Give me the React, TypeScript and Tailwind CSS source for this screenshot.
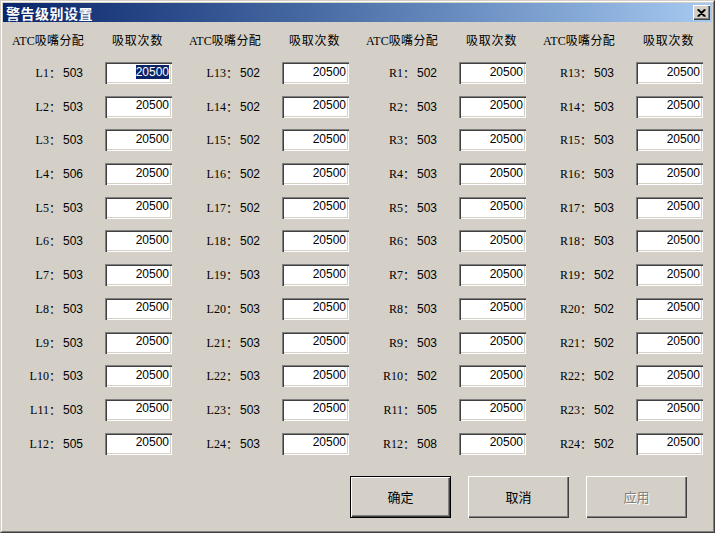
import React from "react";

const cjk = { fontFamily: '"Noto Sans CJK SC", "Liberation Sans", sans-serif' };
const serif = { fontFamily: '"Liberation Serif", "Noto Sans CJK SC", serif' };
const sans = { fontFamily: '"Liberation Sans", Arial, sans-serif' };

const groups: { p: string; start: number; vals: number[] }[] = [
  { p: "L", start: 1, vals: [503, 503, 503, 506, 503, 503, 503, 503, 503, 503, 503, 505] },
  { p: "L", start: 13, vals: [502, 502, 502, 502, 502, 502, 503, 503, 503, 503, 503, 503] },
  { p: "R", start: 1, vals: [502, 503, 503, 503, 503, 503, 503, 503, 503, 502, 505, 508] },
  { p: "R", start: 13, vals: [503, 503, 503, 503, 503, 503, 502, 502, 502, 502, 502, 502] },
];

function Field({ selected }: { selected?: boolean }) {
  return (
    <div
      className="w-[67px] h-[22px] bg-white flex items-center justify-end pr-[3px] pb-[3px] text-[12px] text-black shadow-[inset_1px_1px_0_#808080,inset_2px_2px_0_#404040,inset_-1px_-1px_0_#ffffff,inset_-2px_-2px_0_#d4d0c8]"
      style={sans}
    >
      <span className={selected ? "bg-[#0a246a] text-white leading-[14px]" : "leading-[14px]"}>20500</span>
    </div>
  );
}

function Btn({ label, def, disabled }: { label: string; def?: boolean; disabled?: boolean }) {
  return (
    <div
      className={
        "w-[101px] h-[42px] flex items-center justify-center text-[13px] " +
        (def
          ? "border border-black shadow-[inset_1px_1px_0_#ffffff,inset_-1px_-1px_0_#404040,inset_-2px_-2px_0_#808080]"
          : "shadow-[inset_1px_1px_0_#ffffff,inset_-1px_-1px_0_#404040,inset_-2px_-2px_0_#808080]")
      }
      style={cjk}
    >
      <span
        className={disabled ? "text-[#808080] [text-shadow:1px_1px_0_#ffffff]" : "text-black"}
      >
        {label}
      </span>
    </div>
  );
}

export default function App() {
  return (
    <div className="w-[715px] h-[533px] bg-[#d4d0c8] border border-t-[#d4d0c8] border-l-[#d4d0c8] border-r-[#404040] border-b-[#404040]">
      <div className="w-full h-full border border-t-white border-l-white border-r-[#808080] border-b-[#808080] p-[1px] flex flex-col">
        {/* title bar */}
        <div className="h-[19px] flex items-center justify-between bg-gradient-to-r from-[#0a246a] to-[#a6caf0] pl-[3px] pr-[2px]">
          <span className="text-white font-bold text-[14px] leading-none tracking-[0.5px]" style={cjk}>
            警告级别设置
          </span>
          <div className="w-[17px] h-[15px] bg-[#d4d0c8] flex items-center justify-center shadow-[inset_1px_1px_0_#ffffff,inset_-1px_-1px_0_#404040,inset_-2px_-2px_0_#808080]">
            <svg width="9" height="8" viewBox="0 0 9 8">
              <path d="M0.5 0.5 L7.5 7.5 M1.5 0.5 L8.5 7.5 M7.5 0.5 L0.5 7.5 M8.5 0.5 L1.5 7.5" stroke="#000" strokeWidth="1.2" />
            </svg>
          </div>
        </div>

        {/* columns */}
        <div className="grid grid-cols-[177px_177px_177px_177px] mt-[10px] -ml-[1px]">
          {groups.map((g, gi) => (
            <div key={gi} className="flex flex-col">
              <div className="flex h-[16px] items-center text-[12px] text-black">
                <span className="w-[110px] pl-[10px] whitespace-nowrap" style={cjk}>
                  <span className="text-[12px]" style={serif}>ATC</span>
                  <span className="text-[12px] tracking-[0.4px]">吸嘴分配</span>
                </span>
                <span className="tracking-[0.8px]" style={cjk}>吸取次数</span>
              </div>
              <div className="flex flex-col gap-y-[11.7px] mt-[14px]">
                {g.vals.map((v, i) => (
                  <div key={i} className="flex items-center h-[22px]">
                    <div className="w-[84px] pr-[3px] flex justify-end items-center text-[12px] text-black whitespace-nowrap">
                      <span style={serif}>{g.p}{g.start + i}</span>
                      <span className="mr-[2px]" style={cjk}>：</span>
                      <span style={sans}>{v}</span>
                    </div>
                    <div className="ml-[19px]">
                      <Field selected={gi === 0 && i === 0} />
                    </div>
                  </div>
                ))}
              </div>
            </div>
          ))}
        </div>

        {/* buttons */}
        <div className="flex justify-end gap-[17px] mt-[21px] pr-[25px]">
          <Btn label="确定" def />
          <Btn label="取消" />
          <Btn label="应用" disabled />
        </div>
      </div>
    </div>
  );
}
